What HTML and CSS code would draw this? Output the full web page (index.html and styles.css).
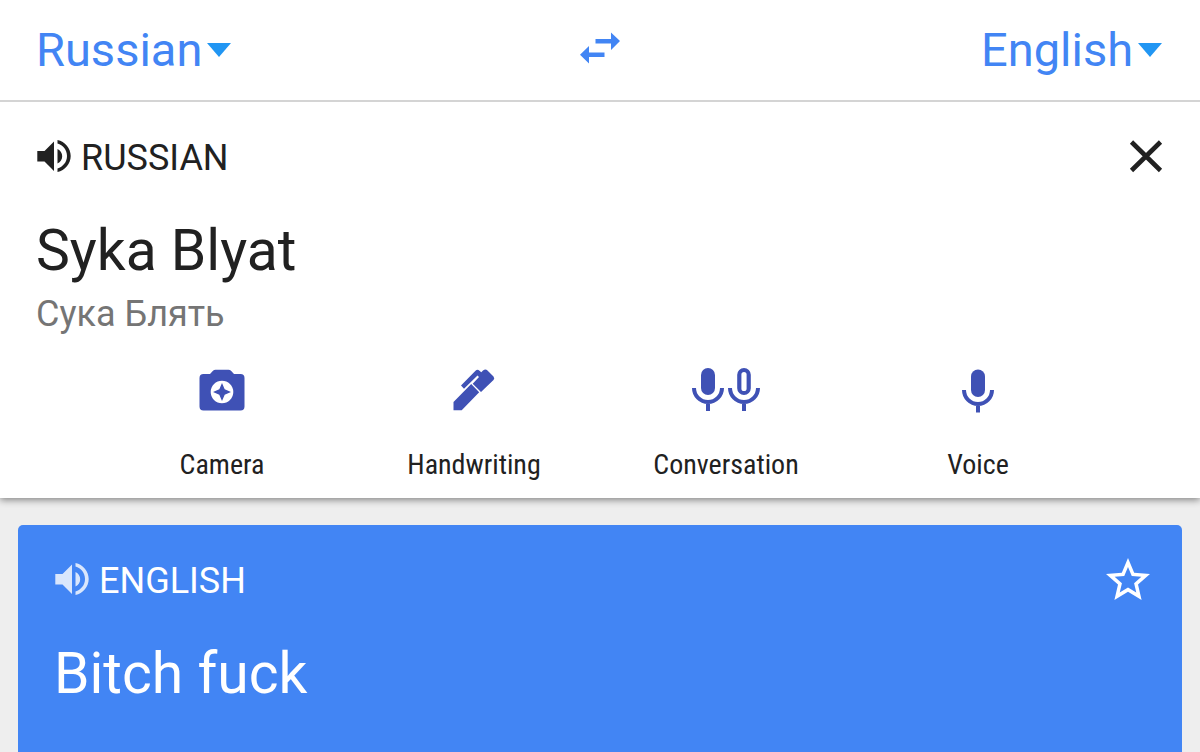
FILE: index.html
```html
<!DOCTYPE html>
<html lang="en">

<head>
    <meta charset="UTF-8">
    <meta name="viewport" content="width=device-width, initial-scale=1.0">
    <title>Translate</title>
    <link rel="stylesheet" href="styles.css">
</head>

<body>

    <header class="languages">
        <div class="picker">
            <select class="picker-select" aria-label="Source language">
                <option>Russian</option>
            </select>
            <svg class="picker-arrow" width="24" height="14" viewBox="0 0 24 14"><path d="M0 0h24L12 14z"/></svg>
        </div>
        <button class="icon-button swap" aria-label="Swap languages">
            <svg width="44" height="36" viewBox="-1 2 44 36"><path d="M17.500 9H33V2.500L42 11l-9 9v-6.500H17.500zM26.500 22.500H11V16l-9 8.700 9 8.800V27h15.500z"/></svg>
        </button>
        <div class="picker">
            <select class="picker-select" aria-label="Target language">
                <option>English</option>
            </select>
            <svg class="picker-arrow" width="24" height="14" viewBox="0 0 24 14"><path d="M0 0h24L12 14z"/></svg>
        </div>
    </header>

    <section class="source">
        <div class="row">
            <button class="icon-button" aria-label="Listen in Russian">
                <svg width="36" height="36" viewBox="0 0 36 36"><path d="M1.300 13H8.500L18 3.500V33L8.500 23.500H1.300zM21.500 11c3 1.400 4.700 4 4.700 7.200s-1.700 5.800-4.700 7.200zM21.500 2C29 3.600 34.700 10.200 34.700 18S29 32.400 21.500 34v-3.600C27 28.800 31 24 31 18S27 7.200 21.500 5.600z"/></svg>
            </button>
            <h2 class="lang-name">RUSSIAN</h2>
            <button class="icon-button end" aria-label="Clear text">
                <svg width="36" height="36" viewBox="0 0 36 36"><path class="cross" d="M3.500 4l29 28.500M32.500 4L3.500 32.500"/></svg>
            </button>
        </div>
        <p class="phrase">Syka Blyat</p>
        <p class="hint" lang="ru">Сука Блять</p>

        <div class="tools">
            <button class="tool">
                <svg width="48" height="48" viewBox="0 0 48 48"><path fill-rule="evenodd" d="M5.500 8H12l3-3.300Q16 3.700 17.500 3.700h13Q32 3.700 33 4.700L36 8h6.500q4 0 4 4v28.500q0 4-4 4h-37q-4 0-4-4V12q0-4 4-4zM24 14.700a11.300 11.300 0 1 0 0 22.600a11.300 11.300 0 1 0 0-22.600zM24 17l2.700 6.300L33 26l-6.300 2.700L24 35l-2.700-6.300L15 26l6.300-2.700z"/></svg>
                <span>Camera</span>
            </button>
            <button class="tool">
                <svg width="48" height="48" viewBox="0 0 48 48"><path d="M3.500 36l17.700-18 8 8.300-17.500 18H3.500zM11 19.500L25.500 4.800q2-2 4 0l1.800 1.500L33 4.600q2.500-2 4.500 0l6 5.800q1.500 2 0 3.500L31 26l-8.300-8.300 6.300-6.700-1.500-1.500L14 22.800z"/></svg>
                <span>Handwriting</span>
            </button>
            <button class="tool">
                <svg width="72" height="48" viewBox="0 0 72 48">
                    <rect x="11" y="2" width="14" height="27" rx="7"/>
                    <path class="stand" d="M4 22a14 14 0 0 0 28 0M18 36v9"/>
                    <path fill-rule="evenodd" d="M54 2a6.800 6.800 0 0 1 6.800 6.800v13.400a6.800 6.800 0 0 1-13.600 0V8.800A6.800 6.800 0 0 1 54 2zM54 6a2.600 2.600 0 0 0-2.600 2.600v13.800a2.600 2.600 0 0 0 5.200 0V8.600A2.600 2.600 0 0 0 54 6z"/>
                    <path class="stand" d="M40 22a14 14 0 0 0 28 0M54 36v9"/>
                </svg>
                <span>Conversation</span>
            </button>
            <button class="tool">
                <svg width="36" height="48" viewBox="0 0 36 48">
                    <rect x="11" y="3.500" width="14" height="27.500" rx="7"/>
                    <path class="stand" d="M4 24a14 14 0 0 0 28 0M18 38v8.500"/>
                </svg>
                <span>Voice</span>
            </button>
        </div>
    </section>

    <main class="result">
        <section class="card">
            <div class="row">
                <button class="icon-button listen" aria-label="Listen in English">
                    <svg width="36" height="36" viewBox="0 0 36 36"><path d="M1.300 13H8.500L18 3.500V33L8.500 23.500H1.300zM21.500 11c3 1.400 4.700 4 4.700 7.200s-1.700 5.800-4.700 7.200zM21.500 2C29 3.600 34.700 10.200 34.700 18S29 32.400 21.500 34v-3.600C27 28.800 31 24 31 18S27 7.200 21.500 5.600z"/></svg>
                </button>
                <h2 class="lang-name">ENGLISH</h2>
                <button class="icon-button end star" aria-label="Save to phrasebook">
                    <svg width="44" height="42" viewBox="2 2 20 19"><path d="M22 9.240l-7.190-.62L12 2 9.190 8.630 2 9.240l5.460 4.730L5.820 21 12 17.270 18.180 21l-1.630-7.030L22 9.240zM12 15.400l-3.760 2.270 1-4.280-3.320-2.880 4.380-.38L12 6.100l1.710 4.040 4.380.38-3.320 2.880 1 4.280L12 15.400z"/></svg>
                </button>
            </div>
            <p class="phrase">Bitch fuck</p>
        </section>
    </main>

</body>
</html>
```

FILE: styles.css
```css
*{
    margin: 0px;
    padding: 0px;
    box-sizing: border-box;
}
body{
    min-height: 100vh;
    display: flex;
    flex-direction: column;
    font-family: Roboto, sans-serif;
    color: #212121;
    background-color: #eee;
}
svg{
    display: block;
    fill: currentColor;
}
button, select{
    border: none;
    background: none;
    font-family: inherit;
    color: inherit;
    cursor: pointer;
}
.languages{
    position: relative;
    z-index: 1;
    display: grid;
    grid-template-columns: 1fr auto 1fr;
    align-items: center;
    height: 102px;
    padding: 0px 38px 0px 36px;
    background-color: #fff;
    border-bottom: 2px solid #d4d4d4;
    color: #4285f4;
}
.picker{
    display: flex;
    align-items: center;
    gap: 4px;
}
.picker:last-child{
    justify-content: flex-end;
}
.picker-select{
    appearance: none;
    font-size: 47px;
    line-height: 56px;
}
.picker-arrow{
    color: #2196f3;
}
.source{
    padding: 36px 36px 15px;
    background-color: #fff;
    box-shadow: 0px 2px 7px rgba(0,0,0,0.45);
}
.row{
    display: flex;
    align-items: center;
    height: 36px;
    gap: 9px;
}
.lang-name{
    padding-top: 4px;
    font-size: 36px;
    font-weight: 400;
    line-height: 36px;
}
.end{
    margin-left: auto;
}
.cross{
    fill: none;
    stroke: currentColor;
    stroke-width: 4.6;
}
.phrase{
    margin-top: 43px;
    font-size: 57px;
    line-height: 68px;
}
.hint{
    margin-top: 7px;
    font-size: 36px;
    line-height: 44px;
    color: #757575;
}
.tools{
    display: grid;
    grid-template-columns: repeat(4, 1fr);
    margin-top: 30px;
    padding: 0px 60px;
}
.tool{
    display: flex;
    flex-direction: column;
    align-items: center;
    gap: 33px;
    font-family: "Roboto Condensed", Roboto, sans-serif;
    font-size: 28px;
    line-height: 36px;
}
.tool svg{
    color: #3f51b5;
}
.stand{
    fill: none;
    stroke: currentColor;
    stroke-width: 4;
}
.result{
    flex: 1;
    display: flex;
    padding: 27px 18px 0px;
}
.card{
    flex: 1;
    padding: 36px 32px 24px 36px;
    border-radius: 5px 5px 0px 0px;
    background-color: #4285f4;
    color: #fff;
}
.listen{
    opacity: 0.8;
}
```
